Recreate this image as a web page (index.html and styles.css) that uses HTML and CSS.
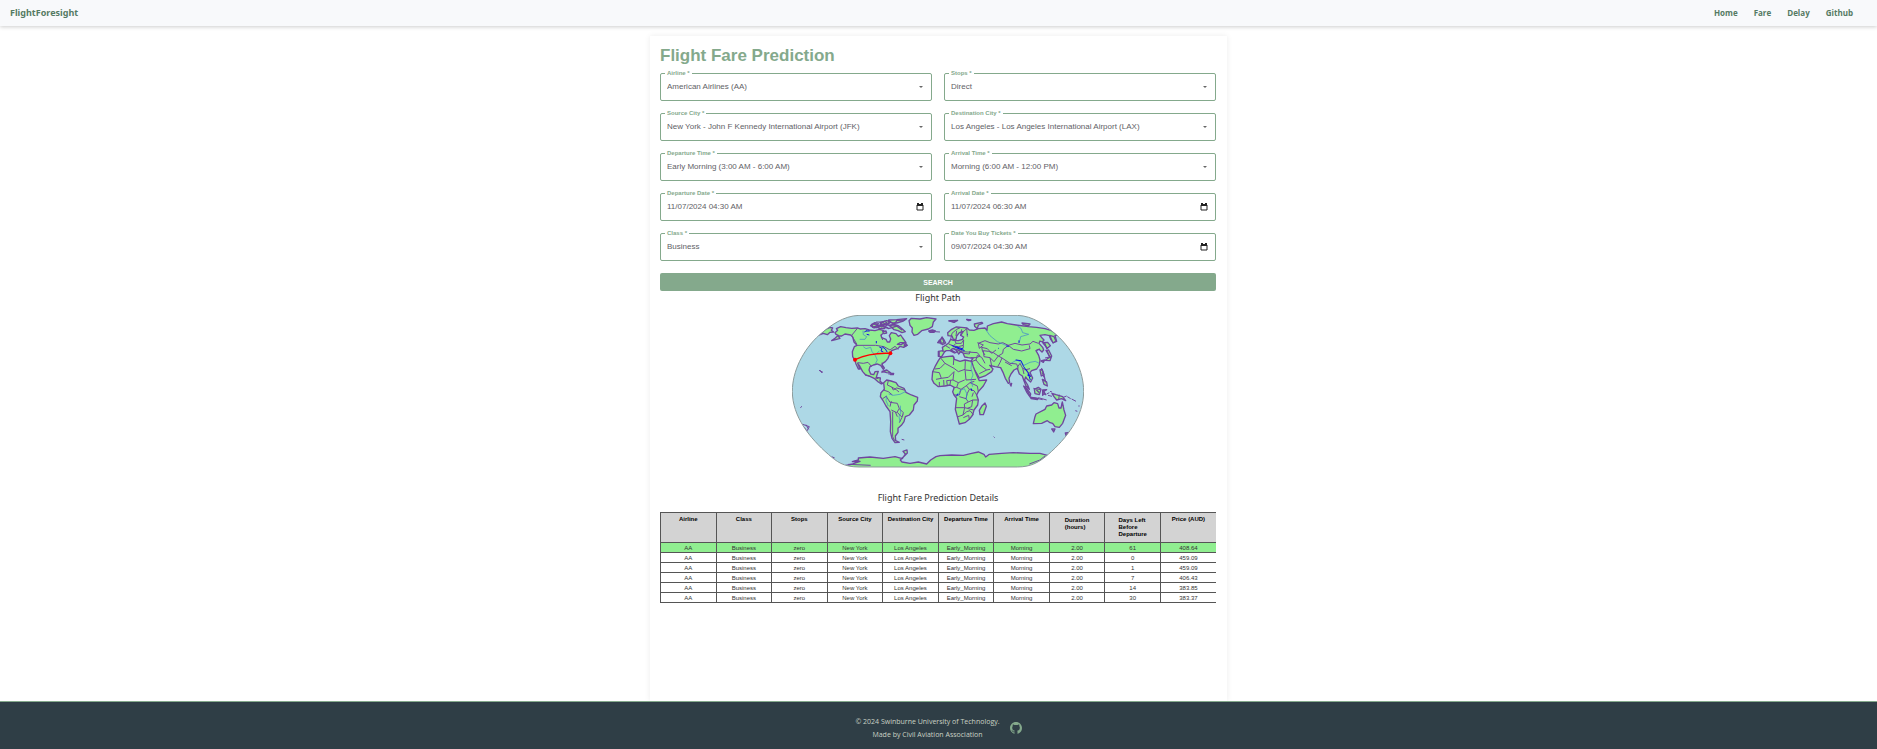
FILE: index.html
```html
<!DOCTYPE html>
<html lang="en">
<head>
<meta charset="utf-8">
<title>FlightForesight</title>
<link rel="stylesheet" href="styles.css">
</head>
<body>
<header class="navbar">
  <a class="brand" href="#">FlightForesight</a>
  <nav class="links"><a href="#">Home</a><a href="#">Fare</a><a href="#">Delay</a><a href="#">Github</a></nav>
</header>
<main class="card">
  <h1 class="title">Flight Fare Prediction</h1>
  <form class="form">
    <div class="field"><label for="airline">Airline *</label><select id="airline"><option>American Airlines (AA)</option></select><span class="caret"></span></div>
    <div class="field"><label for="stops">Stops *</label><select id="stops"><option>Direct</option></select><span class="caret"></span></div>
    <div class="field"><label for="source">Source City *</label><select id="source"><option>New York - John F Kennedy International Airport (JFK)</option></select><span class="caret"></span></div>
    <div class="field"><label for="dest">Destination City *</label><select id="dest"><option>Los Angeles - Los Angeles International Airport (LAX)</option></select><span class="caret"></span></div>
    <div class="field"><label for="deptime">Departure Time *</label><select id="deptime"><option>Early Morning (3:00 AM - 6:00 AM)</option></select><span class="caret"></span></div>
    <div class="field"><label for="arrtime">Arrival Time *</label><select id="arrtime"><option>Morning (6:00 AM - 12:00 PM)</option></select><span class="caret"></span></div>
    <div class="field"><label for="depdate">Departure Date *</label><input id="depdate" type="text" value="11/07/2024 04:30 AM"><svg class="calendar" viewBox="0 0 8 8"><path d="M1 2H7V7H1Z"/><path class="bar" d="M1 2H7M2 0V2M6 0V2"/></svg></div>
    <div class="field"><label for="arrdate">Arrival Date *</label><input id="arrdate" type="text" value="11/07/2024 06:30 AM"><svg class="calendar" viewBox="0 0 8 8"><path d="M1 2H7V7H1Z"/><path class="bar" d="M1 2H7M2 0V2M6 0V2"/></svg></div>
    <div class="field"><label for="class">Class *</label><select id="class"><option>Business</option></select><span class="caret"></span></div>
    <div class="field"><label for="buydate">Date You Buy Tickets *</label><input id="buydate" type="text" value="09/07/2024 04:30 AM"><svg class="calendar" viewBox="0 0 8 8"><path d="M1 2H7V7H1Z"/><path class="bar" d="M1 2H7M2 0V2M6 0V2"/></svg></div>
    <button class="search" type="button">SEARCH</button>
  </form>
  <section class="path">
    <h2 class="subtitle">Flight Path</h2>
    <svg class="map" viewBox="36 45 876 458" role="img" aria-label="World map with the flight from New York to Los Angeles">
      <defs>
        <path id="globe" d="M237 46H712C760 48 795 75 830 105C880 150 911 215 911 274C911 350 860 415 805 463C780 485 755 501 712 501H237C190 501 170 485 145 463C90 415 37 350 37 274C37 215 68 150 118 105C153 75 190 48 237 46Z"/>
        <clipPath id="edge"><use href="#globe"/></clipPath>
      </defs>
      <use href="#globe" class="sea"/>
      <g clip-path="url(#edge)">
        <g class="land">
          <path d="M118 105L136 88 150 82 158 84 154 91 161 96 150 97 142 104 130 100Z"/>
          <path d="M165 98L173 91 169 86 182 80 198 83 215 85 232 84 240 87 255 86 268 90 285 92 298 88 311 92 312 98 303 105 305 113 318 118 322 126 329 126 332 117 328 107 334 98 348 101 355 109 362 105 368 114 378 128 361 128 352 133 365 134 368 129 380 137 371 142 360 139 353 146 345 148 335 152 328 165 324 175 316 185 308 190 306 194 313 204 310 208 302 196 291 192 280 195 270 200 267 210 272 222 281 224 285 215 295 214 291 225 289 232 301 234 300 244 308 250 304 252 295 246 284 236 270 229 257 225 248 215 238 196 233 190 240 207 235 207 228 192 225 182 218 170 217 155 223 140 231 136 222 126 218 111 212 105 195 102 185 108 174 108 180 115 167 119 155 122 165 115 175 106 168 103Z"/>
          <path d="M311 248L320 240 333 243 348 248 355 258 372 265 378 277 394 285 413 292 412 303 402 315 400 330 388 345 376 350 372 365 364 376 354 385 354 397 346 408 347 422 358 427 345 428 336 415 331 395 332 365 330 335 318 318 308 300 301 290 303 278 313 268Z"/>
          <path d="M387 62L394 55 420 57 440 53 468 57 460 66 457 80 445 87 425 92 413 103 402 106 396 96 397 84 390 76Z"/>
          <path d="M446 93L457 90 466 93 462 97 450 97ZM274 74L285 68 295 70 290 78 278 82ZM292 82L300 76 318 79 313 86 300 86ZM300 68L320 62 332 66 325 72 306 74ZM326 60L350 59 380 56 370 63 350 69 332 68ZM328 76L342 73 356 78 368 88 376 95 366 98 354 92 342 89 334 81ZM308 95L318 93 320 99 312 101ZM306 214L320 210 333 219 320 218ZM334 220L341 220 340 224 332 224ZM372 138L382 136 377 130Z"/>
          <path d="M195 497L218 492 240 484 217 485 235 480 235 474 270 471 310 475 345 470 367 476 376 462 369 454 381 450 382 459 370 471 361 480 366 486 390 490 415 486 440 492 452 480 468 470 480 467 515 465 550 466 575 460 595 456 612 463 617 471 628 463 665 460 700 458 750 460 780 460 805 467 780 520 195 520Z"/>
          <g transform="translate(450 0)">
            <path d="M54 107L53 98 65 88 78 81 95 82 111 84 118 90 132 91 145 86 165 84 171 91 172 78 190 71 215 66 232 71 258 75 295 80 320 82 345 86 365 92 385 106 375 106 380 124 370 128 362 118 358 107 345 104 330 106 337 115 342 120 337 126 330 123 327 130 338 142 341 150 336 156 327 148 318 152 326 166 330 180 328 195 320 207 305 212 300 218 308 234 302 246 292 238 287 231 284 240 293 255 298 268 288 258 281 240 277 228 268 222 262 205 252 210 243 222 237 235 239 248 235 250 226 235 219 217 212 203 195 200 179 196 189 207 185 215 165 228 148 234 140 220 128 202 121 186 129 175 115 173 104 171 99 159 91 156 86 162 79 151 70 145 63 149 73 159 60 152 49 152 44 155 35 170 25 169 25 154 39 152 37 142 48 135 56 129 62 118 70 121 85 122 97 118 101 111 92 106 100 94 88 98 80 108 78 118 70 118 66 108Z"/>
            <path d="M25 182L31 173 50 170 69 168 73 178 90 184 105 180 125 184 130 200 140 225 148 242 170 240 160 258 145 275 140 285 145 300 143 315 132 330 128 345 118 358 105 368 88 372 82 350 76 328 78 310 80 295 72 285 68 275 73 262 60 255 45 258 25 260 12 250 6 238 8 215 15 200Z"/>
            <path d="M150 344L148 331 155 319 165 309 169 319 160 344ZM310 371L315 350 318 342 345 328 350 318 365 315 372 308 383 311 387 324 393 324 397 306 402 330 407 346 398 370 388 382 375 380 368 370 360 368 352 362 335 370ZM365 387L375 387 371 396ZM34 130L31 120 36 111 41 118 47 129 37 134ZM23 128L29 120 31 129ZM281 258L291 266 302 282 300 291 291 278ZM302 292L325 295 322 299 303 296ZM313 268L325 262 333 268 328 284 315 281ZM338 270L350 269 341 274 347 284 342 281 338 286ZM366 280L378 284 398 290 407 302 395 296 380 300 372 290ZM330 210L336 208 342 225 334 228ZM337 238L350 246 352 258 342 253ZM338 128L353 127 361 137 352 145ZM348 151L356 150 365 168 360 182 346 181 360 171ZM333 183L344 180 340 187ZM359 106L372 110 378 123 369 129ZM240 252L245 250 243 258ZM57 62L83 61 72 67ZM110 58L122 60 116 62ZM133 72L155 67 158 70 145 75 142 86 134 79ZM276 69L300 72 295 78 280 74ZM406 399L420 397 408 406Z"/>
          </g>
        </g>
        <g class="borders">
          <path d="M233 84L215 106 230 132M230 136H287L312 140 330 150 345 139 355 148M233 188L250 190 264 187 275 200M255 224L270 229M285 234L295 236M310 270L325 275 337 285M325 241L322 255 335 261 350 270 357 276M335 261L340 270 350 264 372 270M320 288L308 296M318 288L330 307 352 310 358 326 350 338 334 330M334 303L330 320M352 337L364 350 370 345M338 335V410L344 422M358 326L370 338 366 352 358 368M346 336L352 350M303 106L308 120M117 211L129 217M119 210L126 219M61 323L66 319M68 373L88 380 80 394 76 386 70 379M78 374L86 388M306 188L308 202M325 222L341 223M304 218L322 211M270 76L290 84M280 72L305 81 318 70 330 79 350 65M288 66L310 66M310 75L352 76M303 85L325 82M365 418L373 420M155 470L164 474M205 493L272 496"/>
          <g transform="translate(450 0)">
            <path d="M32 174L45 190 30 205 15 207M45 190L72 205 85 215 105 208 106 182M72 170L70 195M106 210L125 212M105 208L108 240 138 238M8 215L28 218 34 235 18 238M34 235L55 232 72 215 69 240 50 242 52 256M28 260V246M42 258L41 240M60 254L62 240M69 240L85 248 104 240M85 248L80 262 70 263M80 262L93 268 108 258 120 248 142 258M93 268L88 285 72 285M88 290L108 296 115 306 103 312 104 323 78 323M108 296L112 280 118 268 110 258M118 268L132 272 140 285M120 248L133 244M115 306L128 300 145 300M128 300L125 320 112 325 104 323 99 345 84 350M99 345L110 335 120 332 130 344M112 325L130 330M100 353L116 346 118 358M142 258L145 275M130 278L126 290M62 118L66 100 80 88 93 82M78 108L80 92M92 106L95 88M100 95L110 86M56 132L70 138 78 130 75 122M44 135L60 145M36 153L48 155M28 154V168M70 138L85 140 100 136 101 120 96 118M78 130L94 130 101 120M68 146L88 150 100 143 100 136M80 142L98 153M98 155L112 156 142 158 150 168 140 173 122 173M142 128L160 135 148 145 145 130 165 122 180 128 205 132 218 128 235 136 255 130 276 135 300 132 309 124 325 130M235 136L220 148 218 160 205 168 190 158 175 154 160 152M235 136L250 148 275 153 300 146 298 136M160 152L162 170 180 173 192 185 205 168M180 173L185 198M205 168L216 174 210 188 203 200M216 174L225 180 240 190 260 192 265 205M225 186L245 197M262 202L270 190 278 205 282 222M278 205L290 210 302 230M284 210L300 206M122 186L138 180 150 195 170 210 180 208M138 180L142 166 155 172 165 190M148 221L170 210M310 265L332 269M388 284L386 298M100 160L118 162 120 153M110 84L112 110M155 142L172 146 185 160 198 150M155 142L158 155 165 165M330 147L320 150M340 238L350 246M335 204L335 212M337 218L342 232M350 282L358 278M354 286L366 289M360 274L366 276M400 292L410 288M412 290L422 296M425 297L438 304M395 311L399 317M436 332L442 334M447 316L447 320M191 410L194 413M30 96L0 94M55 63L75 67M110 60L124 60M345 174L364 170M302 291L338 299M325 293L350 300M298 492L330 480 345 468"/>
          </g>
        </g>
        <g class="coast">
          <path d="M272 80L283 70 298 77 308 67 320 76 329 64 343 73 351 61 375 60M280 84L305 78 326 86 350 78 367 91M313 63L322 70"/>
          <path transform="translate(450 0)" d="M27 124L37 113 42 127 31 132M63 150L77 158 86 151 98 158M343 127L351 147M351 152L360 174M336 208L341 222 347 247M319 269L328 278M340 271L344 283M285 259L299 286"/>
        </g>
        <g class="rivers">
          <path d="M239 118L255 118 260 110 250 104 249 92M250 140L258 146 272 142 276 155 285 165 292 180 286 191M290 160L298 153M326 282L340 286 360 283 378 274M320 288L318 302 325 318M361 317L362 340 357 350 360 366"/>
          <path transform="translate(450 0)" d="M168 90L180 107 202 125 230 137M262 78L273 85 278 98 296 103 272 110 268 127M243 190L260 180 272 186 282 196 300 187 316 184 328 190M125 187L123 205 129 225 123 240 128 260M85 286L90 272 103 266 110 280 109 300"/>
        </g>
        <g class="lakes">
          <path d="M253 96L260 92M260 103L268 105M258 93H269M289 123V130M298 141L306 145 303 153 310 156M306 140L316 147 322 157"/>
          <path transform="translate(450 0)" d="M65 136L78 143 90 147 104 152M76 140L100 147M257 180L273 182 281 200 294 218 301 240M292 225L303 229M111 103H113M205 145H207M267 121V129M229 138L237 139M123 265L126 273M83 281L80 289"/>
        </g>
      </g>
      <use href="#globe" class="rim"/>
      <path class="route" d="M225 179Q271 157 331 160"/>
      <circle class="stop" cx="225" cy="179" r="6"/><circle class="stop" cx="331" cy="160" r="6"/>
    </svg>
  </section>
  <section class="details">
    <h2 class="subtitle">Flight Fare Prediction Details</h2>
    <table class="fares">
      <thead><tr><th>Airline</th><th>Class</th><th>Stops</th><th>Source City</th><th>Destination City</th><th>Departure Time</th><th>Arrival Time</th><th><span>Duration<br>(hours)</span></th><th><span>Days Left<br>Before<br>Departure</span></th><th>Price (AUD)</th></tr></thead>
      <tbody>
        <tr class="chosen"><td>AA</td><td>Business</td><td>zero</td><td>New York</td><td>Los Angeles</td><td>Early_Morning</td><td>Morning</td><td>2.00</td><td>61</td><td>408.64</td></tr>
        <tr><td>AA</td><td>Business</td><td>zero</td><td>New York</td><td>Los Angeles</td><td>Early_Morning</td><td>Morning</td><td>2.00</td><td>0</td><td>459.09</td></tr>
        <tr><td>AA</td><td>Business</td><td>zero</td><td>New York</td><td>Los Angeles</td><td>Early_Morning</td><td>Morning</td><td>2.00</td><td>1</td><td>459.09</td></tr>
        <tr><td>AA</td><td>Business</td><td>zero</td><td>New York</td><td>Los Angeles</td><td>Early_Morning</td><td>Morning</td><td>2.00</td><td>7</td><td>406.43</td></tr>
        <tr><td>AA</td><td>Business</td><td>zero</td><td>New York</td><td>Los Angeles</td><td>Early_Morning</td><td>Morning</td><td>2.00</td><td>14</td><td>383.85</td></tr>
        <tr><td>AA</td><td>Business</td><td>zero</td><td>New York</td><td>Los Angeles</td><td>Early_Morning</td><td>Morning</td><td>2.00</td><td>30</td><td>383.37</td></tr>
      </tbody>
    </table>
  </section>
</main>
<footer class="footer">
  <p>© 2024 Swinburne University of Technology.<br>Made by Civil Aviation Association</p>
  <a href="#" aria-label="GitHub"><svg class="github" viewBox="0 0 16 16"><path d="M8 0C3.58 0 0 3.58 0 8c0 3.54 2.29 6.53 5.47 7.59.4.07.55-.17.55-.38 0-.19-.01-.82-.01-1.49-2.01.37-2.53-.49-2.69-.94-.09-.23-.48-.94-.82-1.13-.28-.15-.68-.52-.01-.53.63-.01 1.08.58 1.23.82.72 1.21 1.87.87 2.33.66.07-.52.28-.87.51-1.07-1.78-.2-3.64-.89-3.64-3.95 0-.87.31-1.59.82-2.15-.08-.2-.36-1.02.08-2.12 0 0 .67-.21 2.2.82a7.42 7.42 0 0 1 4 0c1.53-1.04 2.2-.82 2.2-.82.44 1.1.16 1.92.08 2.12.51.56.82 1.27.82 2.15 0 3.07-1.87 3.75-3.65 3.95.29.25.54.73.54 1.48 0 1.07-.01 1.93-.01 2.2 0 .21.15.46.55.38A8.01 8.01 0 0 0 16 8c0-4.42-3.58-8-8-8Z"/></svg></a>
</footer>
</body>
</html>
```
FILE: styles.css
```css
* { box-sizing: border-box; }
body {
  margin: 0;
  min-height: 100vh;
  display: flex;
  flex-direction: column;
  background: #fff;
  font-family: "Noto Sans", "Open Sans", sans-serif;
}
.navbar {
  display: flex;
  align-items: center;
  justify-content: space-between;
  height: 26px;
  padding: 0 24px 2px 10px;
  background: #f8f9fb;
  box-shadow: 0 1px 4px rgba(0, 0, 0, 0.2);
  font-weight: 700;
}
.navbar a { color: #557a63; text-decoration: none; }
.navbar .brand { font-size: 9px; }
.links { display: flex; gap: 16px; font-family: "Open Sans", sans-serif; font-size: 8px; }
.card {
  flex: 1;
  width: 577px;
  margin: 10px auto 0;
  padding: 10px 11px 10px 10px;
  box-shadow: 0 0 6px rgba(0, 0, 0, 0.08);
}
.title {
  margin: 0 0 8px;
  color: #84a98c;
  font: 700 17px/19px "Liberation Sans", Arial, sans-serif;
}
.form {
  display: grid;
  grid-template-columns: 1fr 1fr;
  gap: 12px;
  font-family: "Liberation Sans", Arial, sans-serif;
}
.field { position: relative; height: 28px; }
.field label {
  position: absolute;
  left: 5px;
  top: -3px;
  padding: 0 2px;
  background: #fff;
  color: #84a98c;
  font-size: 6px;
  font-weight: 700;
  line-height: 7px;
}
.field select, .field input {
  display: block;
  width: 100%;
  height: 28px;
  margin: 0;
  padding: 0 6px 1px;
  border: 1px solid #84a98c;
  border-radius: 2px;
  background: #fff;
  color: #616166;
  font: 8px "Liberation Sans", Arial, sans-serif;
  appearance: none;
}
.caret {
  position: absolute;
  right: 9px;
  top: 13px;
  border: 2px solid transparent;
  border-top-color: #666;
  border-bottom: 0;
  pointer-events: none;
}
.calendar {
  position: absolute;
  right: 8px;
  top: 10px;
  width: 8px;
  height: 8px;
  fill: none;
  stroke: #222;
  pointer-events: none;
}
.calendar .bar { stroke-width: 2; }
.search {
  grid-column: 1 / -1;
  height: 18px;
  padding: 0;
  border: 0;
  border-radius: 2px;
  background: #84a98c;
  color: #fff;
  font: 700 7px "Liberation Sans", Arial, sans-serif;
}
.subtitle {
  margin: 0;
  color: #333;
  font-size: 9px;
  font-weight: 400;
  line-height: 14px;
  text-align: center;
}
.map { display: block; width: 292px; margin: 10px auto 0; }
.sea { fill: #add8e6; }
.rim { fill: none; stroke: #8b9a9a; stroke-width: 3; }
.land { fill: #90ee90; stroke: #6f479f; stroke-width: 4; stroke-linejoin: round; }
.borders { fill: none; stroke: #6f479f; stroke-width: 3; }
.coast { fill: none; stroke: #6f479f; stroke-width: 4; }
.rivers { fill: none; stroke: #3f83d0; stroke-width: 2; }
.lakes { fill: none; stroke: #1010e8; stroke-width: 3; }
.route { fill: none; stroke: #f00; stroke-width: 4; }
.stop { fill: #f00; }
.details { margin-top: 23px; }
.fares {
  width: 100%;
  margin-top: 7px;
  border-collapse: collapse;
  table-layout: fixed;
  color: #333;
  font: 6px/7px "Liberation Sans", Arial, sans-serif;
  text-align: center;
}
.fares th, .fares td { border: 1px solid #555; }
.fares th:last-child, .fares td:last-child { border-right: 0; }
.fares th {
  height: 30px;
  padding: 3px 0 0;
  background: #d3d3d3;
  color: #000;
  vertical-align: top;
  white-space: nowrap;
}
.fares th span { display: inline-block; padding-top: 1px; text-align: left; }
.fares td { height: 10px; padding: 2px 0 0; }
.fares .chosen { background: #90ee90; }
.footer {
  display: flex;
  align-items: center;
  justify-content: center;
  gap: 10px;
  height: 48px;
  padding-top: 4px;
  border-top: 1px solid #84a98c;
  background: #2f3e46;
  color: #cad2c5;
  font-family: "Open Sans", sans-serif;
  font-size: 7px;
  line-height: 13px;
  text-align: center;
}
.footer p { margin: 0; }
.github { display: block; width: 12px; height: 12px; fill: #84a98c; }
```
